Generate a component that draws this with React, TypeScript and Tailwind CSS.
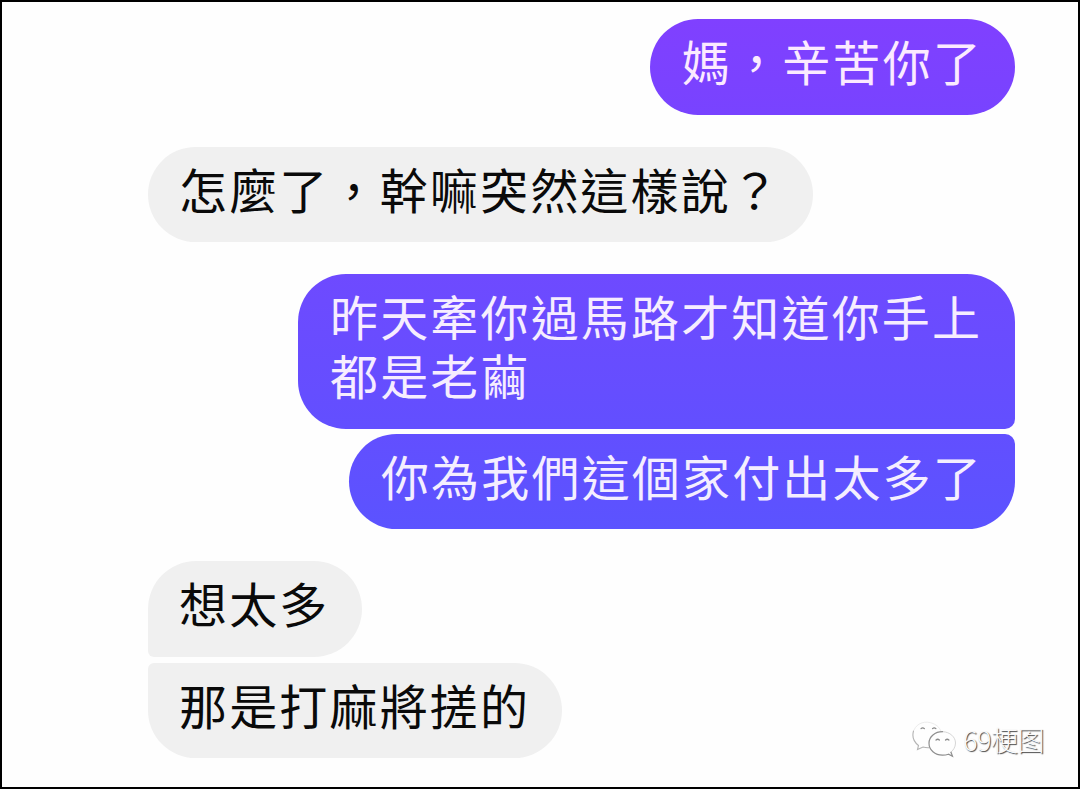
import React from "react"
import { clsx } from "clsx"

interface Message {
  text: string
  from: "me" | "mom"
  className: string
}

const messages: Message[] = [
  {
    text: "媽，辛苦你了",
    from: "me",
    className: "rounded-[48px] bg-linear-to-b from-[#8040ff] to-[#7843ff] text-[#fbeaff]",
  },
  {
    text: "怎麼了，幹嘛突然這樣說？",
    from: "mom",
    className: "mt-8 rounded-[48px]",
  },
  {
    text: "昨天牽你過馬路才知道你手上都是老繭",
    from: "me",
    className: "mt-8 rounded-[48px] rounded-br-[10px] bg-linear-to-b from-[#6e4aff] to-[#624fff] text-[#f6edff]",
  },
  {
    text: "你為我們這個家付出太多了",
    from: "me",
    className: "mt-[5px] rounded-[48px] rounded-tr-[10px] bg-linear-to-b from-[#624fff] to-[#5b53ff] text-[#f4eeff]",
  },
  {
    text: "想太多",
    from: "mom",
    className: "mt-8 rounded-[48px] rounded-bl-[6px]",
  },
  {
    text: "那是打麻將搓的",
    from: "mom",
    className: "mt-[6px] rounded-[48px] rounded-tl-[6px]",
  },
]

const Bubble = ({ text, from, className }: Message) => {
  return (
    <div
      className={clsx(
        "max-w-[717px] pt-3 pb-[24.5px] text-[48px] leading-[59px] tracking-[2.17px] break-all",
        from === "me" ? "self-end px-8" : "self-start bg-[#f0f0f0] pr-8 pl-[31px] text-[#0a0a0a]",
        className
      )}
    >
      {text}
    </div>
  )
}

const WeChatIcon = () => (
  <svg width="46" height="40" viewBox="0 0 46 40" fill="none" strokeLinecap="round">
    <path d="M3 10C6 2.500 15 .5 22 3.500c4.500 2 7.500 5 8 8.500" stroke="#ececec" strokeWidth="1" />
    <path d="M2.500 11C.8 17 3 22 7.500 25.500L6.500 29.500l5.500-2.500c2 .6 4 .8 6 .7" stroke="#b4b4b4" strokeWidth="1.100" />
    <path d="M32 11.700c7 .3 12.500 5.300 12.500 11.300 0 4.500-2.500 7.500-5 9.500" stroke="#d6d6d6" strokeWidth="1" />
    <path d="M31.500 11.700c-7.500 0-13.500 5-13.500 11.500 0 6.800 6 12 13.500 12 2.200 0 4-.3 6-1l4 2-1.500-4" stroke="#8e8e8e" strokeWidth="1.200" />
    <path d="M10 8.700q1.700-1.700 3.400 0M21.500 8.700q1.700-1.700 3.400 0M25 20q1.700-1.500 3.400 0M34.500 20q1.700-1.500 3.400 0" stroke="#8a8a8a" strokeWidth="1.200" />
  </svg>
)

export default function App() {
  return (
    <div
      lang="zh-Hant"
      className="relative h-[789px] w-[1080px] overflow-hidden border-2 border-black bg-[#fefefe] font-['Noto_Sans_CJK_TC',sans-serif] font-normal"
    >
      <div className="flex flex-col pt-[17px] pr-[63px] pl-[146px]">
        {messages.map((message) => (
          <Bubble key={message.text} {...message} />
        ))}
      </div>

      {/* account watermark, over the conversation */}
      <div className="absolute right-[34px] bottom-[27px] flex items-center gap-[6px]">
        <WeChatIcon />
        <span
          lang="zh-Hans"
          className="font-['Noto_Sans_CJK_SC',sans-serif] text-[27px] leading-10 font-light tracking-[-0.5px] text-[#fafafa] [text-shadow:1px_1px_1px_#444]"
        >
          69梗图
        </span>
      </div>
    </div>
  )
}
